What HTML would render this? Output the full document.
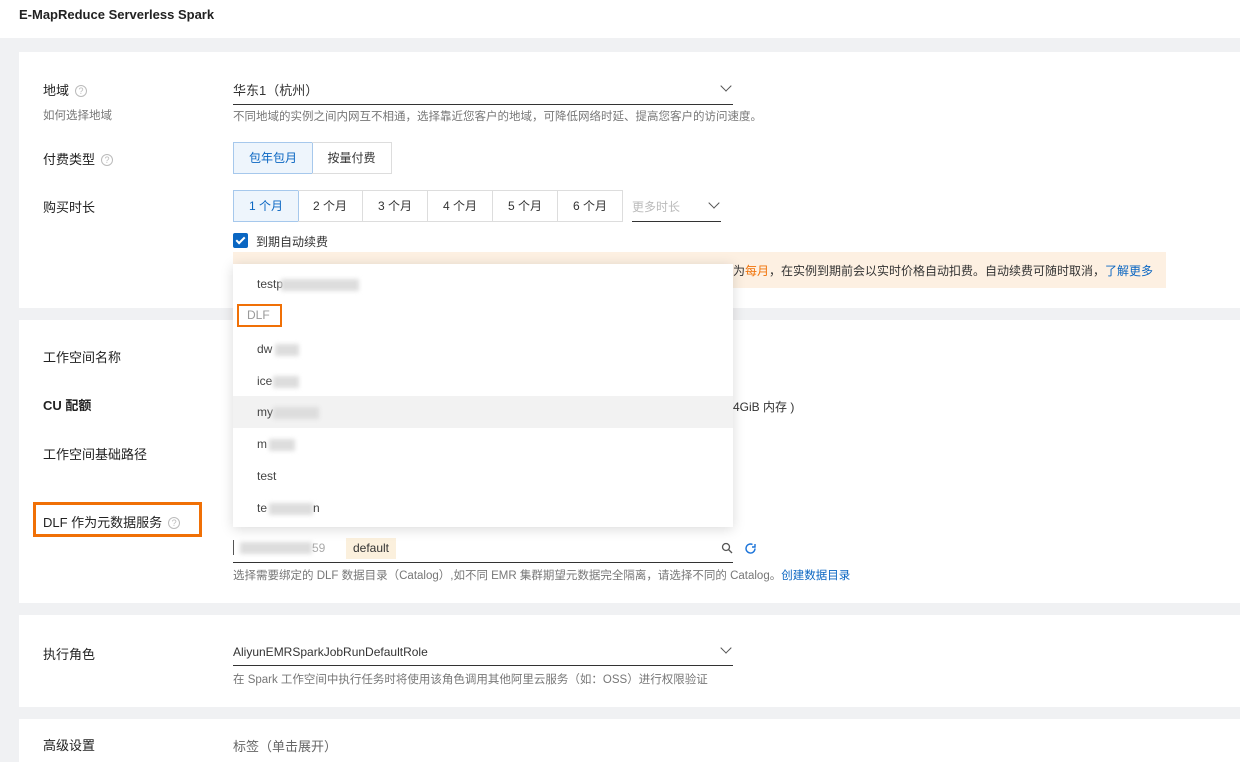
<!DOCTYPE html><html><head><meta charset="utf-8"><style>
*{margin:0;padding:0;box-sizing:border-box}
body{width:1240px;height:762px;overflow:hidden;background:#f0f1f3;font-family:"Liberation Sans","Noto Sans CJK SC",sans-serif;font-size:12px;color:#333;position:relative}
.a{position:absolute;white-space:nowrap}
.hdr{left:0;top:0;width:1240px;height:38px;background:#fff}
.card{left:19px;width:1221px;background:#fff}
.lab{font-size:13px;color:#222}
.q{display:inline-block;width:12px;height:12px;border:1px solid #bbb;border-radius:50%;font-size:9px;color:#bbb;text-align:center;line-height:10px;margin-left:6px;vertical-align:1px}
.help{color:#777;font-size:11.5px}
.btn{top:0;height:100%;border:1px solid #ddd;text-align:center;font-size:12px;color:#333}
.sel{border-bottom:1px solid #333}
.chev{width:8px;height:8px;border-right:1.1px solid #555;border-bottom:1.1px solid #555;transform:rotate(45deg)}
.blur{background:#ddd;filter:blur(2px);height:12px}
.it{left:24px;font-size:12px;color:#444}
</style></head><body>
<div class="a hdr"></div>
<div class="a" style="left:19px;top:7px;font-size:13px;font-weight:bold;color:#222">E-MapReduce Serverless Spark</div>

<div class="a card" style="top:52px;height:256px"></div>
<div class="a card" style="top:320px;height:283px"></div>
<div class="a card" style="top:615px;height:92px"></div>
<div class="a card" style="top:719px;height:43px"></div>

<div class="a lab" style="left:43px;top:80px">地域<span class="q">?</span></div>
<div class="a help" style="left:43px;top:107px">如何选择地域</div>
<div class="a" style="left:233px;top:80px;font-size:13px">华东1（杭州）</div>
<div class="a sel" style="left:233px;top:104px;width:500px"></div>
<div class="a chev" style="left:722px;top:82px"></div>
<div class="a help" style="left:233px;top:108px">不同地域的实例之间内网互不相通，选择靠近您客户的地域，可降低网络时延、提高您客户的访问速度。</div>

<div class="a lab" style="left:43px;top:149px">付费类型<span class="q">?</span></div>
<div class="a" style="left:233px;top:142px;width:159px;height:32px">
<div class="a btn" style="left:0;width:80px;background:#eef5fc;border-color:#a6c8ec;color:#0a66c2;line-height:30px">包年包月</div>
<div class="a btn" style="left:79px;width:80px;line-height:30px;border-left:none">按量付费</div></div>

<div class="a lab" style="left:43px;top:197px">购买时长</div>
<div class="a" style="left:233px;top:190px;width:390px;height:32px">
<div class="a btn" style="left:0;width:66px;background:#eef5fc;border-color:#a6c8ec;color:#0a66c2;line-height:30px">1 个月</div>
<div class="a btn" style="left:65px;width:65px;line-height:30px;border-left:none">2 个月</div>
<div class="a btn" style="left:130px;width:65px;line-height:30px;border-left:none">3 个月</div>
<div class="a btn" style="left:195px;width:65px;line-height:30px;border-left:none">4 个月</div>
<div class="a btn" style="left:260px;width:65px;line-height:30px;border-left:none">5 个月</div>
<div class="a btn" style="left:325px;width:65px;line-height:30px;border-left:none">6 个月</div></div>
<div class="a" style="left:632px;top:198px;color:#bbb">更多时长</div>
<div class="a sel" style="left:632px;top:221px;width:89px"></div>
<div class="a chev" style="left:710px;top:199px"></div>

<div class="a" style="left:233px;top:233px;width:15px;height:15px;background:#0a66c2;border-radius:2px"><div style="position:absolute;left:5px;top:2px;width:5px;height:9px;border-right:2px solid #fff;border-bottom:2px solid #fff;transform:rotate(45deg)"></div></div>
<div class="a" style="left:256px;top:233px">到期自动续费</div>
<div class="a" style="left:233px;top:252px;width:933px;height:36px;background:#fdf0e2"></div>
<div class="a" style="left:733px;top:262px;color:#333">为<span style="color:#f0730a">每月</span>，在实例到期前会以实时价格自动扣费。自动续费可随时取消，<span style="color:#0a66c2">了解更多</span></div>

<div class="a lab" style="left:43px;top:347px">工作空间名称</div>
<div class="a lab" style="left:43px;top:395px;font-weight:bold">CU 配额</div>
<div class="a" style="left:733px;top:398px">4GiB 内存 )</div>
<div class="a lab" style="left:43px;top:444px">工作空间基础路径</div>
<div class="a" style="left:33px;top:502px;width:169px;height:35px;border:3px solid #f07006"></div>
<div class="a lab" style="left:43px;top:512px">DLF 作为元数据服务<span class="q">?</span></div>

<div class="a" style="left:233px;top:540px;width:1px;height:15px;background:#555"></div>
<div class="a blur" style="left:240px;top:542px;width:72px"></div>
<div class="a" style="left:312px;top:541px;color:#aaa">59</div>
<div class="a" style="left:346px;top:538px;width:50px;height:21px;background:#fbf0dd;line-height:21px;text-align:center">default</div>
<svg class="a" style="left:721px;top:542px" width="12" height="12" viewBox="0 0 12 12"><circle cx="5" cy="5" r="3.5" fill="none" stroke="#555" stroke-width="1.3"/><path d="M7.5 7.5L11 11" stroke="#555" stroke-width="1.3"/></svg>
<svg class="a" style="left:744px;top:542px" width="13" height="13" viewBox="0 0 13 13"><path d="M11 6.5A4.5 4.5 0 1 1 8.5 2.5M11 2v3H8" fill="none" stroke="#1a73d9" stroke-width="1.4"/></svg>
<div class="a sel" style="left:233px;top:562px;width:500px"></div>
<div class="a help" style="left:233px;top:567px">选择需要绑定的 DLF 数据目录（Catalog）,如不同 EMR 集群期望元数据完全隔离，请选择不同的 Catalog。<span style="color:#0a66c2">创建数据目录</span></div>

<div class="a lab" style="left:43px;top:644px">执行角色</div>
<div class="a" style="left:233px;top:645px">AliyunEMRSparkJobRunDefaultRole</div>
<div class="a sel" style="left:233px;top:665px;width:500px"></div>
<div class="a chev" style="left:722px;top:644px"></div>
<div class="a help" style="left:233px;top:671px">在 Spark 工作空间中执行任务时将使用该角色调用其他阿里云服务（如：OSS）进行权限验证</div>

<div class="a lab" style="left:43px;top:735px">高级设置</div>
<div class="a" style="left:233px;top:736px;color:#666;font-size:13px">标签（单击展开）</div>

<div class="a" style="left:233px;top:264px;width:500px;height:263px;background:#fff;box-shadow:0 2px 12px rgba(0,0,0,.15)">
<div class="a it" style="top:13px">testp</div><div class="a blur" style="left:48px;top:15px;width:78px"></div>
<div class="a" style="left:4px;top:40px;width:45px;height:23px;border:2px solid #f07006;color:#999;padding:2px 0 0 8px">DLF</div>
<div class="a it" style="top:78px">dw</div><div class="a blur" style="left:42px;top:80px;width:24px"></div>
<div class="a it" style="top:110px">ice</div><div class="a blur" style="left:40px;top:112px;width:26px"></div>
<div class="a" style="left:0;top:132px;width:500px;height:32px;background:#f2f2f2"></div>
<div class="a it" style="top:141px">my</div><div class="a blur" style="left:40px;top:143px;width:46px"></div>
<div class="a it" style="top:173px">m</div><div class="a blur" style="left:36px;top:175px;width:26px"></div>
<div class="a it" style="top:205px">test</div>
<div class="a it" style="top:237px">te</div><div class="a blur" style="left:36px;top:239px;width:44px"></div><div class="a" style="left:80px;top:237px;color:#444">n</div>
</div>
</body></html>
